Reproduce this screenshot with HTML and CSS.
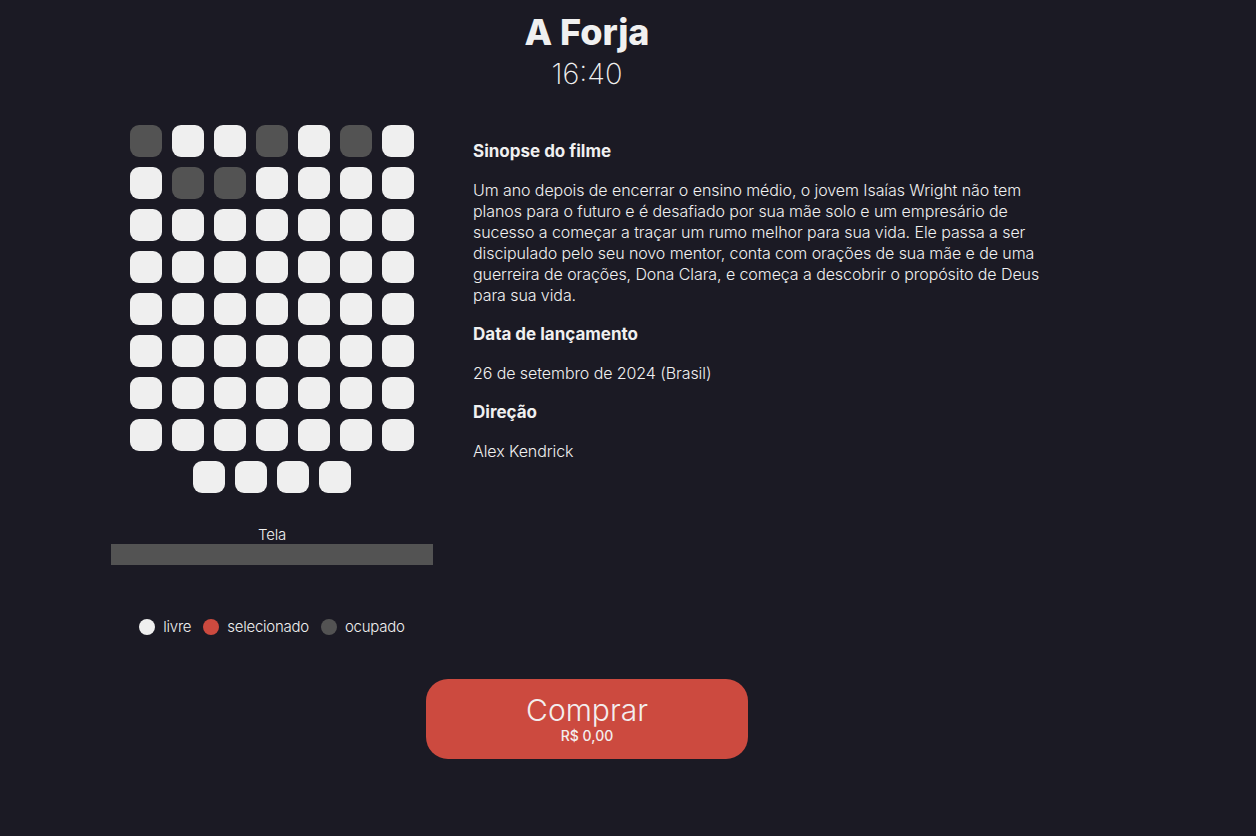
FILE: index.html
```html
<!DOCTYPE html>
<html lang="pt-BR">
<head>
<meta charset="utf-8">
<title>A Forja</title>
<link rel="stylesheet" href="styles.css">
</head>
<body>
<div class="page">
  <header class="head">
    <h1 class="title">A Forja</h1>
    <div class="time">16:40</div>
  </header>
  <main class="main">
    <section class="room">
      <div class="seats">
        <span class="seat taken"></span><span class="seat"></span><span class="seat"></span><span class="seat taken"></span><span class="seat"></span><span class="seat taken"></span><span class="seat"></span>
        <span class="seat"></span><span class="seat taken"></span><span class="seat taken"></span><span class="seat"></span><span class="seat"></span><span class="seat"></span><span class="seat"></span>
        <span class="seat"></span><span class="seat"></span><span class="seat"></span><span class="seat"></span><span class="seat"></span><span class="seat"></span><span class="seat"></span>
        <span class="seat"></span><span class="seat"></span><span class="seat"></span><span class="seat"></span><span class="seat"></span><span class="seat"></span><span class="seat"></span>
        <span class="seat"></span><span class="seat"></span><span class="seat"></span><span class="seat"></span><span class="seat"></span><span class="seat"></span><span class="seat"></span>
        <span class="seat"></span><span class="seat"></span><span class="seat"></span><span class="seat"></span><span class="seat"></span><span class="seat"></span><span class="seat"></span>
        <span class="seat"></span><span class="seat"></span><span class="seat"></span><span class="seat"></span><span class="seat"></span><span class="seat"></span><span class="seat"></span>
        <span class="seat"></span><span class="seat"></span><span class="seat"></span><span class="seat"></span><span class="seat"></span><span class="seat"></span><span class="seat"></span>
        <span class="seat"></span><span class="seat"></span><span class="seat"></span><span class="seat"></span>
      </div>
      <div class="screen-label">Tela</div>
      <div class="screen"></div>
      <ul class="legend">
        <li class="legend-item"><span class="dot free"></span>livre</li>
        <li class="legend-item"><span class="dot selected"></span>selecionado</li>
        <li class="legend-item"><span class="dot taken"></span>ocupado</li>
      </ul>
    </section>
    <section class="info">
      <h2 class="info-title">Sinopse do filme</h2>
      <p class="info-text">Um ano depois de encerrar o ensino médio, o jovem Isaías Wright não tem planos para o futuro e é desafiado por sua mãe solo e um empresário de sucesso a começar a traçar um rumo melhor para sua vida. Ele passa a ser discipulado pelo seu novo mentor, conta com orações de sua mãe e de uma guerreira de orações, Dona Clara, e começa a descobrir o propósito de Deus para sua vida.</p>
      <h2 class="info-title">Data de lançamento</h2>
      <p class="info-text">26 de setembro de 2024 (Brasil)</p>
      <h2 class="info-title">Direção</h2>
      <p class="info-text">Alex Kendrick</p>
    </section>
  </main>
  <button class="buy" type="button">
    <span class="buy-label">Comprar</span>
    <span class="buy-price">R$ 0,00</span>
  </button>
</div>
</body>
</html>
```

FILE: styles.css
```css
* { box-sizing: border-box; }

html, body {
  margin: 0;
  padding: 0;
  background: #1b1a24;
  color: #f0f0f0;
  font-family: Inter, "Noto Sans", sans-serif;
}

body { min-height: 836px; }

.page {
  width: 1174px;
  display: flex;
  flex-direction: column;
  align-items: center;
  padding-top: 11px;
}

.head {
  display: flex;
  flex-direction: column;
  align-items: center;
}

.title {
  margin: 0;
  font-size: 36px;
  line-height: 42px;
  font-weight: 800;
}

.time {
  margin-top: 3px;
  font-size: 29px;
  line-height: 36px;
  font-weight: 200;
}

.main {
  display: flex;
  gap: 40px;
  margin-top: 33px;
}

.room {
  width: 322px;
  display: flex;
  flex-direction: column;
  align-items: center;
}

.seats {
  width: 284px;
  display: flex;
  flex-wrap: wrap;
  justify-content: center;
  gap: 10px;
}

.seat {
  width: 32px;
  height: 32px;
  border-radius: 9px;
  background: #efefef;
}

.seat.taken { background: #535353; }

.screen-label {
  margin-top: 32px;
  font-size: 15px;
  line-height: 19px;
  font-weight: 300;
  letter-spacing: -0.2px;
}

.screen {
  width: 322px;
  height: 21px;
  background: #535353;
}

.legend {
  list-style: none;
  margin: 52px 0 0;
  padding: 0;
  display: flex;
  gap: 12px;
  font-size: 15px;
  line-height: 20px;
  font-weight: 300;
  letter-spacing: -0.25px;
}

.legend-item {
  display: flex;
  align-items: center;
  gap: 8px;
}

.dot {
  width: 16px;
  height: 16px;
  border-radius: 50%;
}

.dot.free { background: #efefef; }
.dot.selected { background: #cc4a3f; }
.dot.taken { background: #535353; }

.info {
  width: 590px;
  padding-top: 16px;
}

.info-title {
  margin: 0;
  font-size: 17px;
  line-height: 21px;
  font-weight: 700;
}

.info-text {
  margin: 18px 0 18px;
  font-size: 16px;
  line-height: 21px;
  font-weight: 300;
  letter-spacing: -0.08px;
}

.buy {
  margin-top: 42px;
  width: 322px;
  height: 80px;
  border: none;
  border-radius: 22px;
  background: #cc4a3f;
  color: #f3eeee;
  font-family: Inter, "Noto Sans", sans-serif;
  display: flex;
  flex-direction: column;
  align-items: center;
  justify-content: center;
  padding: 0;
}

.buy-label {
  font-size: 30px;
  line-height: 34px;
  font-weight: 300;
}

.buy-price {
  font-size: 14px;
  line-height: 18px;
  font-weight: 500;
}
```
